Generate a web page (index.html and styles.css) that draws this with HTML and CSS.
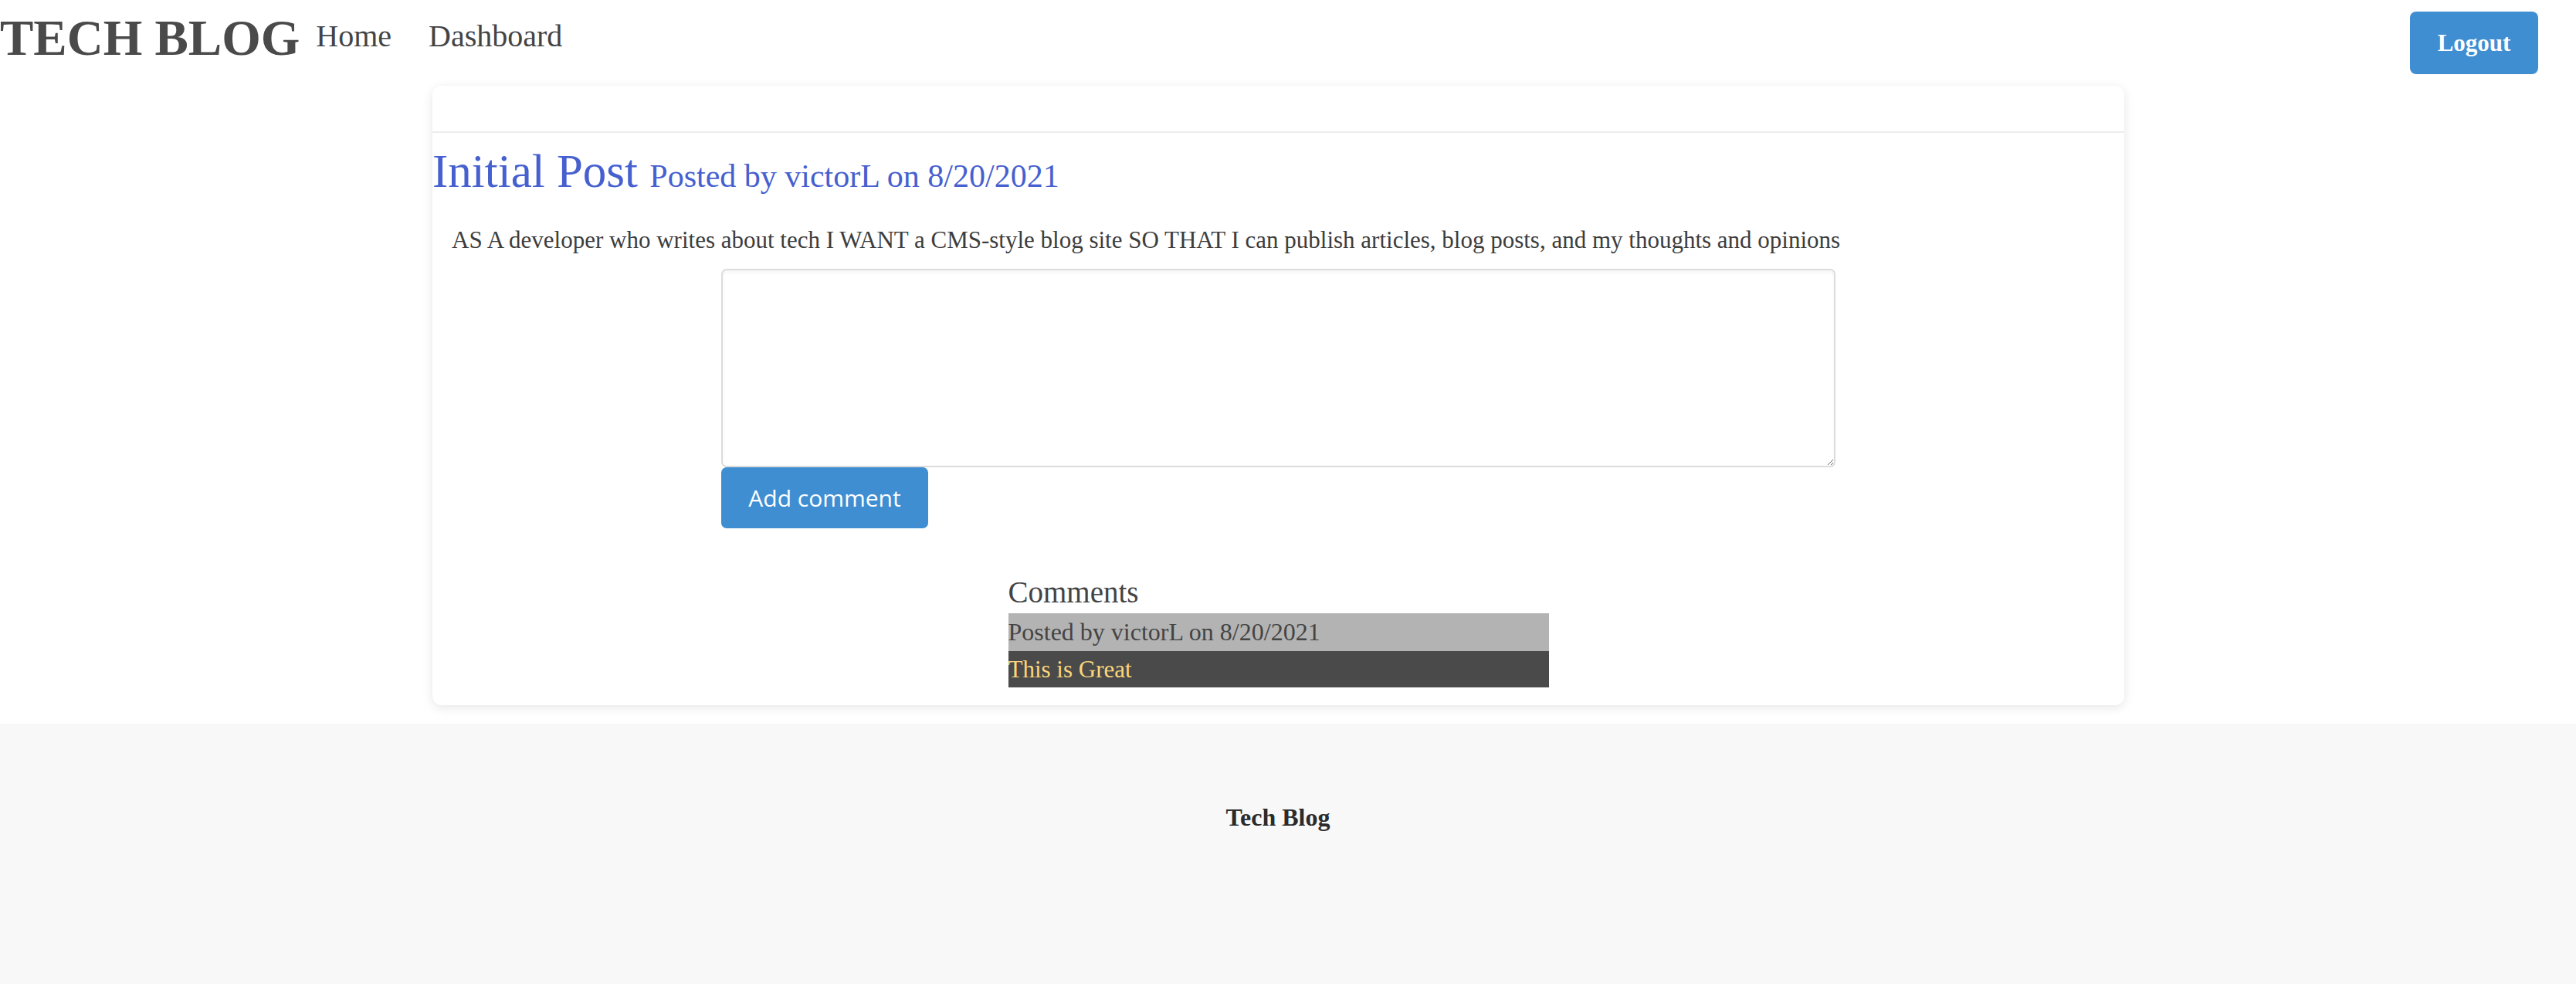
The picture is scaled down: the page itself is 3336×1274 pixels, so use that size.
FILE: index.html
```html
<!DOCTYPE html>
<html lang="en">
<head>
<meta charset="utf-8">
<title>Tech Blog</title>
<link rel="stylesheet" href="styles.css">
</head>
<body>
<header class="site-header">
  <div class="brand-nav">
    <h1 class="brand">TECH BLOG</h1>
    <nav class="nav">
      <a class="nav-link" href="#">Home</a>
      <a class="nav-link" href="#">Dashboard</a>
    </nav>
  </div>
  <button class="logout-btn" type="button">Logout</button>
</header>

<main class="main">
  <article class="card">
    <div class="card-header"></div>
    <div class="card-body">
      <h2 class="post-title">Initial Post <span class="post-meta">Posted by victorL on 8/20/2021</span></h2>
      <p class="post-content">AS A developer who writes about tech I WANT a CMS-style blog site SO THAT I can publish articles, blog posts, and my thoughts and opinions</p>
      <form class="comment-form">
        <textarea class="comment-input" name="comment"></textarea>
        <button class="comment-btn" type="button">Add comment</button>
      </form>
      <section class="comments">
        <h3 class="comments-title">Comments</h3>
        <div class="comment-meta">Posted by victorL on 8/20/2021</div>
        <div class="comment-text">This is Great</div>
      </section>
    </div>
  </article>
</main>

<footer class="site-footer">
  <p class="footer-text">Tech Blog</p>
</footer>
</body>
</html>
```

FILE: styles.css
```css
* { box-sizing: border-box; }

html, body {
  margin: 0;
  padding: 0;
  background: #ffffff;
}

body {
  font-family: "Liberation Serif", "Times New Roman", serif;
  color: #444444;
}

.site-header {
  display: flex;
  justify-content: space-between;
  align-items: flex-start;
  padding: 0 49px 0 0;
  height: 111px;
}

.brand-nav {
  display: flex;
  align-items: flex-start;
}

.brand {
  margin: 12px 0 0 0;
  font-size: 65px;
  font-weight: bold;
  color: #4a4a4a;
  line-height: normal;
}

.nav {
  display: flex;
  gap: 48px;
  margin: 23px 0 0 21px;
}

.nav-link {
  font-size: 40px;
  color: #444444;
  text-decoration: none;
  line-height: normal;
}

.logout-btn {
  margin-top: 15px;
  width: 166px;
  height: 81px;
  border: none;
  border-radius: 8px;
  background: #3f8ed2;
  color: #ffffff;
  font-family: "Liberation Serif", "Times New Roman", serif;
  font-weight: bold;
  font-size: 31px;
  cursor: pointer;
}

.main {
  padding: 0 0 24px 560px;
}

.card {
  width: 2191px;
  background: #ffffff;
  border-radius: 12px;
  box-shadow: 0 3px 14px rgba(0, 0, 0, 0.10);
}

.card-header {
  height: 61px;
  border-bottom: 2px solid #ececec;
}

.card-body {
  padding: 0 0 23px 0;
}

.post-title {
  margin: 15px 0 0 0;
  font-size: 61px;
  font-weight: normal;
  color: #4660cf;
  line-height: normal;
}

.post-meta {
  font-size: 42px;
}

.post-content {
  margin: 36px 0 0 25px;
  font-size: 31px;
  color: #3d3d3d;
  line-height: normal;
}

.comment-form {
  display: flex;
  flex-direction: column;
  align-items: flex-start;
  width: 1443px;
  margin: 19px auto 0 auto;
}

.comment-input {
  display: block;
  width: 1443px;
  height: 257px;
  margin: 0;
  border: 2px solid #dcdcdc;
  border-radius: 7px;
  box-shadow: inset 0 3px 4px rgba(0, 0, 0, 0.04);
  resize: both;
  background: #ffffff;
}

.comment-btn {
  width: 268px;
  height: 79px;
  border: none;
  border-radius: 7px;
  background: #3f8ed2;
  color: #ffffff;
  font-family: "Open Sans", "Noto Sans", sans-serif;
  font-size: 30px;
  cursor: pointer;
}

.comments {
  width: 700px;
  margin: 60px auto 0 auto;
}

.comments-title {
  margin: 0 0 5px 0;
  font-size: 39px;
  font-weight: normal;
  color: #444444;
  line-height: normal;
}

.comment-meta {
  height: 49px;
  background: #b3b3b3;
  color: #444444;
  font-size: 32px;
  line-height: 49px;
}

.comment-text {
  height: 47px;
  background: #4a4a4a;
  color: #fbd77d;
  font-size: 31px;
  line-height: 47px;
}

.site-footer {
  background: #f8f8f8;
  height: 337px;
  padding: 103px 26px 0 0;
}

.footer-text {
  margin: 0;
  text-align: center;
  font-size: 32px;
  font-weight: bold;
  color: #2b2b2b;
  line-height: normal;
}
```
